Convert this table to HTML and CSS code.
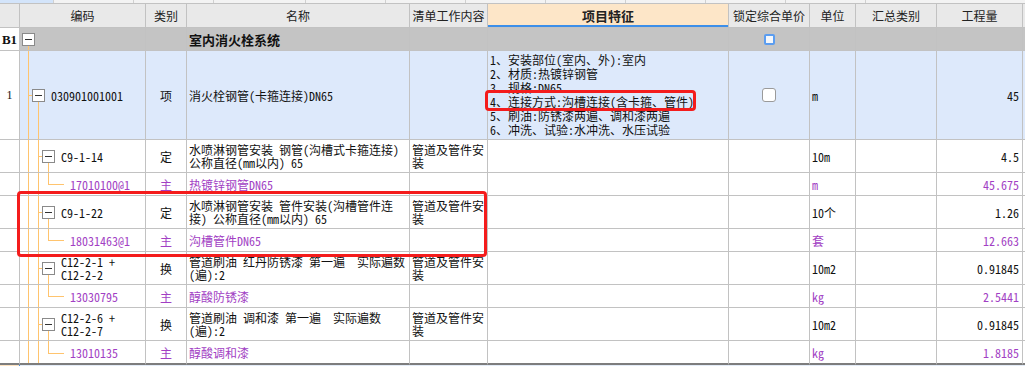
FILE: index.html
```html
<!DOCTYPE html>
<html lang="zh-CN">
<head>
<meta charset="utf-8">
<title>分部分项</title>
<link rel="stylesheet" href="styles.css">
</head>
<body>
<div class="sheet">
  <div class="strip">
    <span class="seg seg-a"></span><span class="seg w80"></span><span class="seg w80"></span><span class="seg w92"></span><span class="seg w80"></span><span class="seg w80"></span><span class="seg w80"></span><span class="seg w80"></span><span class="seg w80"></span><span class="seg w80"></span><span class="seg w80"></span><span class="seg rest"></span>
  </div>

  <div class="row head">
    <div class="c idx"></div>
    <div class="c">编码</div>
    <div class="c">类别</div>
    <div class="c">名称</div>
    <div class="c">清单工作内容</div>
    <div class="c feat-h">项目特征</div>
    <div class="c">锁定综合单价</div>
    <div class="c">单位</div>
    <div class="c">汇总类别</div>
    <div class="c">工程量</div>
    <div class="c end"></div>
  </div>

  <div class="row group">
    <div class="c idx b1">B1</div>
    <div class="c code t0"><span class="box"></span></div>
    <div class="c"></div>
    <div class="c name title">室内消火栓系统</div>
    <div class="c"></div>
    <div class="c"></div>
    <div class="c center"><span class="chk chk-blue"></span></div>
    <div class="c"></div>
    <div class="c"></div>
    <div class="c"></div>
    <div class="c end"></div>
  </div>

  <div class="row main">
    <div class="c idx">1</div>
    <div class="c code t1"><span class="box"></span><span class="ctext">030901001001</span></div>
    <div class="c cat">项</div>
    <div class="c name">消火栓钢管(卡箍连接)DN65</div>
    <div class="c"></div>
    <div class="c feat">
      <div>1、安装部位(室内、外):室内</div>
      <div>2、材质:热镀锌钢管</div>
      <div>3、规格:DN65</div>
      <div>4、连接方式:沟槽连接(含卡箍、管件)</div>
      <div>5、刷油:防锈漆两遍、调和漆两遍</div>
      <div>6、冲洗、试验:水冲洗、水压试验</div>
    </div>
    <div class="c center"><span class="chk"></span></div>
    <div class="c unit">m</div>
    <div class="c"></div>
    <div class="c qty">45</div>
    <div class="c end"></div>
  </div>

  <div class="row quota">
    <div class="c idx"></div>
    <div class="c code t2"><span class="box"></span><span class="ctext">C9-1-14</span></div>
    <div class="c cat">定</div>
    <div class="c name">水喷淋钢管安装 钢管(沟槽式卡箍连接)<br>公称直径(mm以内) 65</div>
    <div class="c work">管道及管件安<br>装</div>
    <div class="c"></div>
    <div class="c"></div>
    <div class="c unit">10m</div>
    <div class="c"></div>
    <div class="c qty">4.5</div>
    <div class="c end"></div>
  </div>

  <div class="row mat">
    <div class="c idx"></div>
    <div class="c code t3"><span class="ctext">17010100@1</span></div>
    <div class="c cat">主</div>
    <div class="c name">热镀锌钢管DN65</div>
    <div class="c"></div>
    <div class="c"></div>
    <div class="c"></div>
    <div class="c unit">m</div>
    <div class="c"></div>
    <div class="c qty">45.675</div>
    <div class="c end"></div>
  </div>

  <div class="row quota">
    <div class="c idx"></div>
    <div class="c code t2"><span class="box"></span><span class="ctext">C9-1-22</span></div>
    <div class="c cat">定</div>
    <div class="c name">水喷淋钢管安装 管件安装(沟槽管件连<br>接) 公称直径(mm以内) 65</div>
    <div class="c work">管道及管件安<br>装</div>
    <div class="c"></div>
    <div class="c"></div>
    <div class="c unit">10个</div>
    <div class="c"></div>
    <div class="c qty">1.26</div>
    <div class="c end"></div>
  </div>

  <div class="row mat">
    <div class="c idx"></div>
    <div class="c code t3"><span class="ctext">18031463@1</span></div>
    <div class="c cat">主</div>
    <div class="c name">沟槽管件DN65</div>
    <div class="c"></div>
    <div class="c"></div>
    <div class="c"></div>
    <div class="c unit">套</div>
    <div class="c"></div>
    <div class="c qty">12.663</div>
    <div class="c end"></div>
  </div>

  <div class="row quota">
    <div class="c idx"></div>
    <div class="c code t2"><span class="box"></span><span class="ctext">C12-2-1 +<br>C12-2-2</span></div>
    <div class="c cat">换</div>
    <div class="c name">管道刷油 红丹防锈漆 第一遍&nbsp;&nbsp;实际遍数<br>(遍):2</div>
    <div class="c work">管道及管件安<br>装</div>
    <div class="c"></div>
    <div class="c"></div>
    <div class="c unit">10m2</div>
    <div class="c"></div>
    <div class="c qty">0.91845</div>
    <div class="c end"></div>
  </div>

  <div class="row mat">
    <div class="c idx"></div>
    <div class="c code t3"><span class="ctext">13030795</span></div>
    <div class="c cat">主</div>
    <div class="c name">醇酸防锈漆</div>
    <div class="c"></div>
    <div class="c"></div>
    <div class="c"></div>
    <div class="c unit">kg</div>
    <div class="c"></div>
    <div class="c qty">2.5441</div>
    <div class="c end"></div>
  </div>

  <div class="row quota">
    <div class="c idx"></div>
    <div class="c code t2"><span class="box"></span><span class="ctext">C12-2-6 +<br>C12-2-7</span></div>
    <div class="c cat">换</div>
    <div class="c name">管道刷油 调和漆 第一遍&nbsp;&nbsp;实际遍数<br>(遍):2</div>
    <div class="c work">管道及管件安<br>装</div>
    <div class="c"></div>
    <div class="c"></div>
    <div class="c unit">10m2</div>
    <div class="c"></div>
    <div class="c qty">0.91845</div>
    <div class="c end"></div>
  </div>

  <div class="row mat last">
    <div class="c idx"></div>
    <div class="c code t3"><span class="ctext">13010135</span></div>
    <div class="c cat">主</div>
    <div class="c name">醇酸调和漆</div>
    <div class="c"></div>
    <div class="c"></div>
    <div class="c"></div>
    <div class="c unit">kg</div>
    <div class="c"></div>
    <div class="c qty">1.8185</div>
    <div class="c end"></div>
  </div>

  <div class="foot"><span class="foot-a"></span><span class="foot-b"></span></div>

  <div class="mark mark-feature"></div>
  <div class="mark mark-rows"></div>
</div>
</body>
</html>
```

FILE: styles.css
```css
:root {
  --grid: #c2c2c2;
  --tl: #ffc46e;
  --purple: #a23fc4;
}

* { box-sizing: border-box; }

html, body {
  margin: 0;
  padding: 0;
  background: #ffffff;
}

body {
  width: 1025px;
  height: 366px;
  overflow: hidden;
  font-family: "Noto Sans Mono CJK SC", "Noto Sans CJK SC", sans-serif;
  font-size: 12px;
  line-height: 13px;
  color: #111;
}

.sheet {
  position: relative;
  width: 1025px;
}

/* top strip */
.strip {
  display: flex;
  height: 4px;
  border-bottom: 1px solid var(--grid);
  background: #f3f3f3;
}
.seg {
  height: 3px;
  border-right: 1px solid #d0d0d0;
}
.seg-a { width: 54px; background: #d3e4fa; }
.w80 { width: 80px; }
.w92 { width: 92px; }
.rest { flex: 1; border-right: 0; }

/* rows */
.row {
  display: grid;
  grid-template-columns: 20px 126px 41px 223px 78px 241px 81px 46px 81px 86px 3px;
}
.c {
  border-right: 1px solid var(--grid);
  border-bottom: 1px solid var(--grid);
  display: flex;
  align-items: center;
  overflow: hidden;
  white-space: nowrap;
  min-width: 0;
}
.c.end { border-right: 0; }

.head { height: 24px; background: #e9e9e9; }
.head .c { justify-content: center; color: #222; }
.head .idx { background: #e9e9e9; }
.head .feat-h {
  background: #fde6c8;
  font-weight: 700;
  font-size: 13px;
  box-shadow: inset 0 -2px 0 #3d8fe9;
}

.group { height: 23px; background: #c4c4c4; }
.main { height: 89px; background: #dde9fb; }
.quota { height: 33px; }
.mat { height: 23px; }
.mat.last { height: 24px; }
.mat.last .c { border-bottom: 2px solid #7d7d7d; }

.idx {
  background: #ffffff;
  justify-content: center;
  font-family: "Liberation Serif", serif;
  font-size: 12px;
}
.b1 { font-weight: 700; font-size: 13px; }

.center { justify-content: center; }
.cat { justify-content: center; }
.name { padding-left: 2px; }
.title { font-weight: 700; font-size: 13px; }
.work { padding-left: 2px; }
.unit { padding-left: 2px; }
.qty { justify-content: flex-end; padding-right: 3px; }

.feat {
  flex-direction: column;
  align-items: flex-start;
  justify-content: center;
  padding-left: 2px;
  line-height: 14px;
}

.mat .c:not(.idx) { color: var(--purple); }

/* tree column */
.code {
  background-repeat: no-repeat;
  background-origin: border-box;
  background-clip: border-box;
}
.code .box {
  flex: none;
  position: relative;
  width: 13px;
  height: 13px;
  border: 1px solid #8a8a8a;
  background: #ffffff;
}
.code .box::after {
  content: "";
  position: absolute;
  left: 2px;
  right: 2px;
  top: 5px;
  height: 1px;
  background: #333;
}
.ctext { margin-left: 6px; }

.t0 { padding-left: 2px; }
.t0 {
  background-image: linear-gradient(var(--tl), var(--tl));
  background-position: 8px bottom;
  background-size: 1px calc(50% - 6px);
}

.t1 { padding-left: 12px; }
.t1 {
  background-image:
    linear-gradient(var(--tl), var(--tl)),
    linear-gradient(var(--tl), var(--tl)),
    linear-gradient(var(--tl), var(--tl));
  background-position: 8px 0, 8px 50%, 18px bottom;
  background-size: 1px 100%, 4px 1px, 1px calc(50% - 6px);
}

.t2 { padding-left: 22px; }
.t2 {
  background-image:
    linear-gradient(var(--tl), var(--tl)),
    linear-gradient(var(--tl), var(--tl)),
    linear-gradient(var(--tl), var(--tl)),
    linear-gradient(var(--tl), var(--tl));
  background-position: 8px 0, 18px 0, 18px 50%, 28px bottom;
  background-size: 1px 100%, 1px 100%, 4px 1px, 1px calc(50% - 6px);
}

.t3 { padding-left: 44px; }
.t3 {
  background-image:
    linear-gradient(var(--tl), var(--tl)),
    linear-gradient(var(--tl), var(--tl)),
    linear-gradient(var(--tl), var(--tl)),
    linear-gradient(var(--tl), var(--tl));
  background-position: 8px 0, 18px 0, 28px 0, 28px 50%;
  background-size: 1px 100%, 1px 100%, 1px 50%, 16px 1px;
}

/* checkboxes */
.chk {
  display: block;
  width: 14px;
  height: 14px;
  border: 1px solid #9a9a9a;
  border-radius: 3px;
  background: #ffffff;
}
.chk-blue {
  width: 11px;
  height: 11px;
  border: 2px solid #5b9df0;
  border-radius: 2px;
  background: #f4f7fb;
}

/* bottom */
.foot { display: flex; height: 1px; }
.foot-a { width: 19px; background: #fde3c2; }
.foot-b { flex: 1; background: #e3ecf8; border-left: 1px solid #3d8fe9; }

/* red annotation boxes (overlay) */
.mark {
  position: absolute;
  border: 3px solid #f41c1c;
  border-radius: 4px;
  pointer-events: none;
}
.mark-feature { left: 485px; top: 90px; width: 211px; height: 21px; }
.mark-rows { left: 17px; top: 191px; width: 470px; height: 66px; }
```
